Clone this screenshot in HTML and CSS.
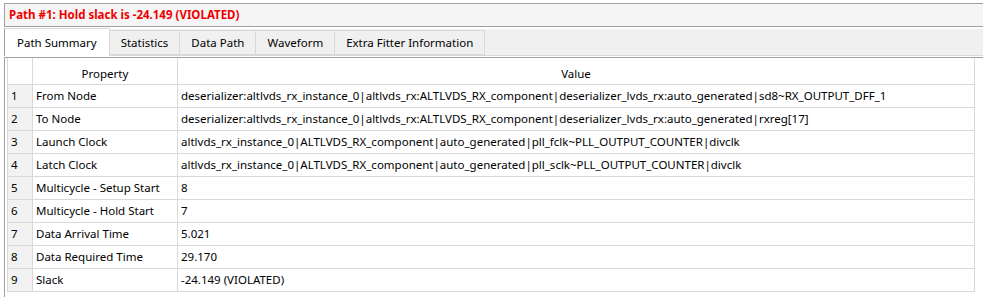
FILE: index.html
```html
<!doctype html>
<html lang="en">
<head>
<meta charset="utf-8">
<title>Path Summary</title>
<link rel="stylesheet" href="styles.css">
</head>
<body>

<!-- path header -->
<div class="path-title">Path #1: Hold slack is -24.149 (VIOLATED)</div>

<!-- report tabs -->
<div class="tabs">
  <div class="tab active">Path Summary</div>
  <div class="tab">Statistics</div>
  <div class="tab">Data Path</div>
  <div class="tab">Waveform</div>
  <div class="tab">Extra Fitter Information</div>
</div>

<div class="panel">
  <table class="summary">
    <colgroup>
      <col class="c-num">
      <col class="c-prop">
      <col class="c-val">
    </colgroup>
    <thead>
      <tr>
        <th></th>
        <th>Property</th>
        <th>Value</th>
      </tr>
    </thead>
    <tbody>
      <tr><td>1</td><td>From Node</td><td>deserializer:altlvds_rx_instance_0|altlvds_rx:ALTLVDS_RX_component|deserializer_lvds_rx:auto_generated|sd8~RX_OUTPUT_DFF_1</td></tr>
      <tr><td>2</td><td>To Node</td><td>deserializer:altlvds_rx_instance_0|altlvds_rx:ALTLVDS_RX_component|deserializer_lvds_rx:auto_generated|rxreg[17]</td></tr>
      <tr><td>3</td><td>Launch Clock</td><td>altlvds_rx_instance_0|ALTLVDS_RX_component|auto_generated|pll_fclk~PLL_OUTPUT_COUNTER|divclk</td></tr>
      <tr><td>4</td><td>Latch Clock</td><td>altlvds_rx_instance_0|ALTLVDS_RX_component|auto_generated|pll_sclk~PLL_OUTPUT_COUNTER|divclk</td></tr>
      <tr><td>5</td><td>Multicycle - Setup Start</td><td>8</td></tr>
      <tr><td>6</td><td>Multicycle - Hold Start</td><td>7</td></tr>
      <tr><td>7</td><td>Data Arrival Time</td><td>5.021</td></tr>
      <tr><td>8</td><td>Data Required Time</td><td>29.170</td></tr>
      <tr><td>9</td><td>Slack</td><td>-24.149 (VIOLATED)</td></tr>
    </tbody>
  </table>
</div>

</body>
</html>
```

FILE: styles.css
```css
:root{
  --frame:  #a0a0a0;   /* outer frame lines */
  --grid:   #d9d9d9;   /* table grid */
  --tabbg:  #f0f0f0;   /* inactive tabs */
  --bar:    #f5f5f5;   /* title bar */
  --red:    #ee0000;   /* violation text */
  --txt:    #000;
}

* {
  box-sizing: border-box;
  margin: 0;
  padding: 0;
}
body {
  font-family: 'Noto Sans', sans-serif;
  font-size: 11.5px;
  color: var(--txt);
  background: #fff;
  padding: 3px 0 0 4px;
  overflow: hidden;
  height: 297px;
}

/* ── title bar ─────────────────────────────────────────────────── */
.path-title {
  height: 24px;
  margin-right: -10px;
  background: var(--bar);
  border: 1px solid var(--frame);
  color: var(--red);
  font-weight: 700;
  line-height: 21px;
  padding-left: 4px;
}

/* ── tabs ──────────────────────────────────────────────────────── */
.tabs {
  display: flex;
  align-items: flex-end;
  height: 29px;
  margin-right: -10px;
  padding-top: 2px;
  background: linear-gradient(#fff 0 2px, var(--tabbg) 2px);
  border-bottom: 1px solid var(--grid);
}
.tab {
  height: 25px;
  line-height: 24px;
  padding: 0 11px;
  border: 1px solid var(--grid);
  border-left: none;
  background: var(--tabbg);
  white-space: nowrap;
}
.tab.active {
  height: 28px;
  margin-bottom: -1px;
  line-height: 28px;
  padding: 0 12px;
  background: #fff;
  border: 1px solid var(--grid);
  border-left-color: var(--frame);
  border-bottom: none;
}

/* ── summary table ─────────────────────────────────────────────── */
.panel {
  margin-top: 1px;
  border-top: 1px solid var(--frame);
  border-left: 1px solid var(--frame);
  padding-left: 2px;
  height: 240px;
}
.summary {
  width: 968px;
  border-collapse: collapse;
  table-layout: fixed;
}
.c-num  { width: 25px; }
.c-prop { width: 145px; }
.summary th,
.summary td {
  border: 1px solid var(--grid);
  white-space: nowrap;
  overflow: hidden;
}
.summary thead tr:first-child th {
  border-top: none;
}
.summary th {
  height: 26px;
  font-weight: 400;
  text-align: center;
  padding-top: 5px;
}
.summary td {
  height: 23px;
  padding: 0 3px;
  line-height: 21px;
}
.summary td:first-child {
  background: #f2f2f2;
  padding-left: 3px;
}
```
